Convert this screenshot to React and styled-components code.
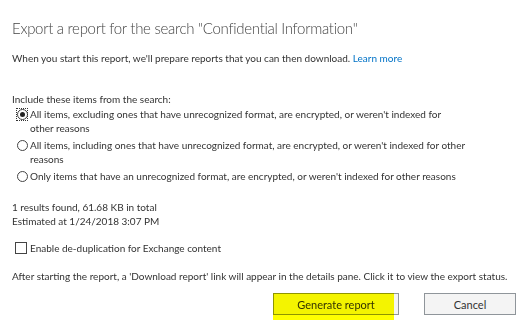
import React, { useState } from 'react';
import styled, { createGlobalStyle } from 'styled-components';

const GlobalStyle = createGlobalStyle`
  html, body {
    margin: 0;
    padding: 0;
    background: #ffffff;
  }
  body {
    font-family: "Lato", "Open Sans", sans-serif;
    color: #333333;
  }
`;

const Dialog = styled.div`
  width: 531px;
  height: 331px;
  box-sizing: border-box;
  padding: 18px 15px 0 12px;
  display: flex;
  flex-direction: column;
  background: #ffffff;
`;

const Title = styled.h1`
  margin: 0;
  font-family: "Lato", sans-serif;
  font-weight: 300;
  font-size: 15px;
  letter-spacing: -0.3px;
  line-height: 20px;
  color: #444444;
`;

const Text = styled.p`
  margin: ${(p) => p.$top || 0}px 0 0 0;
  font-size: 10px;
  line-height: 14px;
  color: #333333;
`;

const Link = styled.a`
  color: #0072c6;
  text-decoration: none;
`;

const Options = styled.div`
  margin-top: 1px;
  width: 462px;
  display: flex;
  flex-direction: column;
  gap: 3px;
`;

const OptionRow = styled.label`
  display: grid;
  grid-template-columns: 12px 1fr;
  column-gap: 2px;
  padding-left: 4px;
  font-size: 10px;
  line-height: 14px;
  white-space: pre-line;
  cursor: pointer;
`;

const RadioWrap = styled.span`
  width: 12px;
  height: 13px;
  margin-top: 1px;
  display: flex;
  align-items: center;
  justify-content: center;
  outline: ${(p) => (p.$focus ? '1px dotted #333' : 'none')};
  outline-offset: -1px;
`;

const RadioCircle = styled.span`
  width: 9px;
  height: 9px;
  border: 1px solid #444;
  border-radius: 50%;
  display: flex;
  align-items: center;
  justify-content: center;
  &::after {
    content: '';
    width: 5px;
    height: 5px;
    border-radius: 50%;
    background: ${(p) => (p.$checked ? '#222' : 'transparent')};
  }
`;

const CheckRow = styled.label`
  margin-top: 13px;
  display: flex;
  align-items: center;
  gap: 3px;
  padding-left: 3px;
  font-size: 10px;
  line-height: 14px;
  cursor: pointer;
`;

const Box = styled.span`
  width: 10px;
  height: 10px;
  border: 1px solid #444;
  background: #fff;
`;

const Footer = styled.div`
  margin-top: 10px;
  display: flex;
  justify-content: flex-end;
  gap: 25px;
`;

const Button = styled.button`
  position: relative;
  width: ${(p) => p.$w}px;
  height: 22px;
  box-sizing: border-box;
  border: 1px solid #8f959a;
  background: #f4f4f4;
  font-family: "Lato", "Open Sans", sans-serif;
  font-size: 11px;
  color: #333;
  padding: 0;
  cursor: pointer;
`;

const Highlight = styled.span`
  position: absolute;
  left: -1px;
  top: -1px;
  width: 121px;
  height: 27px;
  background: #ffff00;
  mix-blend-mode: multiply;
  pointer-events: none;
`;

const options = [
  "All items, excluding ones that have unrecognized format, are encrypted, or weren't indexed for\nother reasons",
  "All items, including ones that have unrecognized format, are encrypted, or weren't indexed for other reasons",
  "Only items that have an unrecognized format, are encrypted, or weren't indexed for other reasons",
];

export default function App() {
  const [selected, setSelected] = useState(0);
  const [dedupe, setDedupe] = useState(false);

  return (
    <>
      <GlobalStyle />
      <Dialog>
        <Title>Export a report for the search "Confidential Information"</Title>
        <Text $top={13}>
          When you start this report, we'll prepare reports that you can then download. <Link href="#">Learn more</Link>
        </Text>
        <Text $top={27}>Include these items from the search:</Text>
        <Options>
          {options.map((o, i) => (
            <OptionRow key={i} onClick={() => setSelected(i)}>
              <RadioWrap $focus={selected === i}>
                <RadioCircle $checked={selected === i} />
              </RadioWrap>
              <span>{o}</span>
            </OptionRow>
          ))}
        </Options>
        <Text $top={17}>
          1 results found, 61.68 KB in total
          <br />
          Estimated at 1/24/2018 3:07 PM
        </Text>
        <CheckRow onClick={() => setDedupe(!dedupe)}>
          <Box />
          Enable de-duplication for Exchange content
        </CheckRow>
        <Text $top={14}>
          After starting the report, a 'Download report' link will appear in the details pane. Click it to view the export status.
        </Text>
        <Footer>
          <Button $w={126}>
            Generate report
            <Highlight />
          </Button>
          <Button $w={92}>Cancel</Button>
        </Footer>
      </Dialog>
    </>
  );
}
